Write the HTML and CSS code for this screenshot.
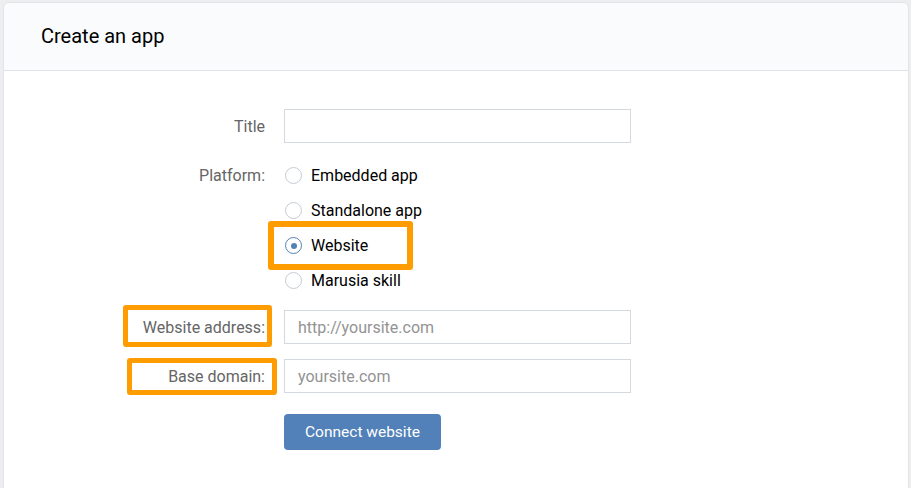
FILE: index.html
```html
<!DOCTYPE html>
<html>
<head>
<meta charset="utf-8">
<link rel="stylesheet" href="styles.css">
</head>
<body>
<div class="card">
  <div class="card-header">Create an app</div>
  <form class="form">
    <div class="row row-title">
      <label class="label">Title</label>
      <input class="input" type="text">
    </div>
    <div class="row row-platform">
      <div class="label label-platform">Platform:</div>
      <div class="radios">
        <div class="radio"><span class="circle"></span><span>Embedded app</span></div>
        <div class="radio"><span class="circle"></span><span>Standalone app</span></div>
        <div class="radio"><span class="circle checked"></span><span>Website</span></div>
        <div class="radio"><span class="circle"></span><span>Marusia skill</span></div>
        <div class="hl hl-website"></div>
      </div>
    </div>
    <div class="row row-address">
      <label class="label">Website address:</label>
      <input class="input" type="text" placeholder="http://yoursite.com">
      <div class="hl hl-address"></div>
    </div>
    <div class="row row-domain">
      <label class="label">Base domain:</label>
      <input class="input" type="text" placeholder="yoursite.com">
      <div class="hl hl-domain"></div>
    </div>
    <div class="row row-button">
      <div class="label"></div>
      <div><button type="button" class="btn">Connect website</button></div>
    </div>
  </form>
</div>
</body>
</html>
```
FILE: styles.css
```css
html, body {
  margin: 0;
  padding: 0;
}
body {
  background: #edeef0;
  font-family: Roboto, "Open Sans", Arial, sans-serif;
  font-size: 16px;
  color: #000;
  padding: 2px 2px 0 3px;
  height: 488px;
  box-sizing: border-box;
  overflow: hidden;
}
.card {
  background: #fff;
  border: 1px solid #e3e4e8;
  border-radius: 6px;
  height: 500px;
  box-sizing: border-box;
}
.card-header {
  background: #fafbfc;
  border-bottom: 1px solid #e1e3e8;
  border-radius: 6px 6px 0 0;
  height: 68px;
  box-sizing: border-box;
  padding-left: 37px;
  padding-bottom: 2px;
  display: flex;
  align-items: center;
  font-size: 20px;
  color: #000;
}
.form {
  padding-top: 38px;
  display: flex;
  flex-direction: column;
}
.row {
  position: relative;
  display: grid;
  grid-template-columns: 261px 347px;
  column-gap: 19px;
  align-items: center;
}
.label {
  text-align: right;
  color: #656565;
}
.input {
  height: 34px;
  box-sizing: border-box;
  border: 1px solid #d3d9de;
  border-radius: 0;
  padding: 0 13px;
  font-family: Roboto, "Open Sans", Arial, sans-serif;
  font-size: 16px;
  color: #000;
  margin: 0;
  outline: none;
}
.input::placeholder {
  color: #939393;
}
.row-platform {
  margin-top: 15px;
  align-items: start;
}
.label-platform {
  line-height: 35px;
}
.radios {
  position: relative;
  display: flex;
  flex-direction: column;
}
.radio {
  height: 35px;
  display: flex;
  align-items: center;
  gap: 9px;
  padding-left: 1px;
}
.circle {
  width: 17px;
  height: 17px;
  box-sizing: border-box;
  border: 1px solid #c5ccd4;
  border-radius: 50%;
  position: relative;
  flex: none;
}
.circle.checked {
  border-color: #5181b8;
}
.circle.checked::after {
  content: "";
  position: absolute;
  left: 4.5px;
  top: 4.5px;
  width: 6px;
  height: 6px;
  border-radius: 50%;
  background: #5181b8;
}
.row-address {
  margin-top: 12px;
}
.row-domain {
  margin-top: 15px;
}
.row-button {
  margin-top: 21px;
}
.btn {
  height: 36px;
  padding: 0 21px;
  background: #5181b8;
  color: #fff;
  border: none;
  border-radius: 4px;
  font-family: Roboto, "Open Sans", Arial, sans-serif;
  font-size: 15.5px;
  margin: 0;
}
.hl {
  position: absolute;
  border: 6px solid #ff9c00;
  border-radius: 3px;
  box-sizing: border-box;
  pointer-events: none;
}
.hl-website {
  left: -16px;
  top: 63px;
  width: 145px;
  height: 49px;
}
.hl-address {
  left: 119px;
  top: -5px;
  width: 149px;
  height: 42px;
  border-width: 5px;
}
.hl-domain {
  left: 123px;
  top: -1px;
  width: 150px;
  height: 37px;
  border-width: 5px;
}
```
